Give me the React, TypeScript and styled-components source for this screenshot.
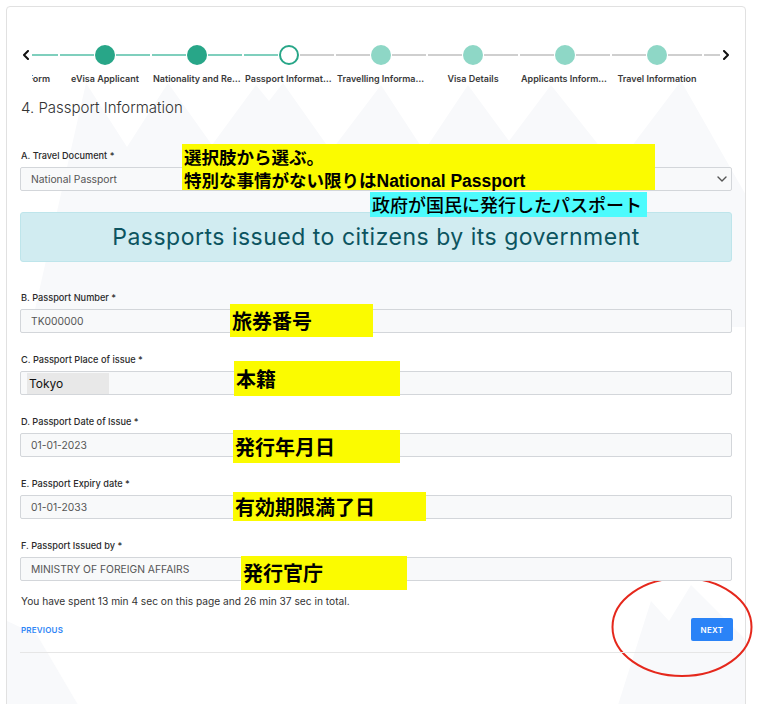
import React from 'react';
import styled, { createGlobalStyle } from 'styled-components';

type StepState = 'done' | 'current' | 'todo';

type Step = {
    label: string
    state: StepState
}

const steps: Step[] = [
    { label: 'Application Form', state: 'done' },
    { label: 'eVisa Applicant', state: 'done' },
    { label: 'Nationality and Residence', state: 'done' },
    { label: 'Passport Information', state: 'current' },
    { label: 'Travelling Information', state: 'todo' },
    { label: 'Visa Details', state: 'todo' },
    { label: 'Applicants Information', state: 'todo' },
    { label: 'Travel Information', state: 'todo' },
    { label: 'Confirmation', state: 'todo' },
];

const currentIndex = steps.findIndex(s => s.state === 'current');

type Note = {
    left: number
    top: number
    width: number
    height: number
    text: string
}

type FieldData = {
    label: string
    value: string
    highlight?: boolean
    note: Note
}

const fields: FieldData[] = [
    { label: 'B. Passport Number *', value: 'TK000000', note: { left: 210, top: 12, width: 143, height: 33, text: '旅券番号' } },
    { label: 'C. Passport Place of issue *', value: 'Tokyo', highlight: true, note: { left: 214, top: 7, width: 166, height: 35, text: '本籍' } },
    { label: 'D. Passport Date of Issue *', value: '01-01-2023', note: { left: 213, top: 14, width: 167, height: 33, text: '発行年月日' } },
    { label: 'E. Passport Expiry date *', value: '01-01-2033', note: { left: 213, top: 14, width: 193, height: 29, text: '有効期限満了日' } },
    { label: 'F. Passport Issued by *', value: 'MINISTRY OF FOREIGN AFFAIRS', note: { left: 221, top: 16, width: 166, height: 34, text: '発行官庁' } },
];

const Chevron = ({ dir }: { dir: 'left' | 'right' | 'down' }) => {
    const d = dir === 'left' ? 'M6 1 L2 5 L6 9' : dir === 'right' ? 'M2 1 L6 5 L2 9' : 'M1 2 L5 6 L9 2';
    const w = dir === 'down' ? 10 : 8;
    const h = dir === 'down' ? 8 : 10;
    return (
        <svg width={w} height={h} viewBox={`0 0 ${w} ${h}`}>
            <path d={d} fill="none" stroke={dir === 'down' ? '#555' : '#111'} strokeWidth={dir === 'down' ? 1.4 : 2} strokeLinecap="round" strokeLinejoin="round"/>
        </svg>
    );
};

const App = () => {
    return (
        <Page>
            <GlobalStyle/>
            <Card>
                <Mountains viewBox="0 0 740 720" preserveAspectRatio="none">
                    <polygon
                        points="24,320 79,76 120,140 161,76 205,138 249,78 262,94 276,76 324,144 374,78 417,144 461,78 502,134 544,78 609,160 674,74 740,190 740,320"
                        fill="#f8f9fb"/>
                    <polygon points="0,614 30,628 84,720 0,720" fill="#f8f9fb"/>
                    <polygon points="604,720 644,594 662,614 684,578 740,634 740,720" fill="#f8f9fb"/>
                </Mountains>
                <Content>
                    <Stepper>
                        <Arrow><Chevron dir="left"/></Arrow>
                        <StepViewport>
                            <StepTrack>
                                {steps.map((step, i) => (
                                    <StepCell key={step.label}>
                                        <StepLineRow>
                                            <Connector active={i <= currentIndex}/>
                                            <Dot state={step.state}/>
                                            <Connector active={i < currentIndex}/>
                                        </StepLineRow>
                                        <StepLabel>{step.label}</StepLabel>
                                    </StepCell>
                                ))}
                            </StepTrack>
                        </StepViewport>
                        <Arrow><Chevron dir="right"/></Arrow>
                    </Stepper>

                    <Heading>4. Passport Information</Heading>

                    <FieldGroup first>
                        <FieldLabel>A. Travel Document *</FieldLabel>
                        <Control>
                            <ControlText>National Passport</ControlText>
                            <Chevron dir="down"/>
                        </Control>
                        <NoteBox left={162} top={-6} width={473} height={46} tone="yellow" multi>
                            <span>選択肢から選ぶ。</span>
                            <span>特別な事情がない限りは<Latin>National Passport</Latin></span>
                        </NoteBox>
                        <NoteBox left={350} top={42} width={277} height={25} tone="cyan">
                            政府が国民に発行したパスポート
                        </NoteBox>
                    </FieldGroup>

                    <Alert>Passports issued to citizens by its government</Alert>

                    {fields.map(f => (
                        <FieldGroup key={f.label}>
                            <FieldLabel>{f.label}</FieldLabel>
                            <Control>
                                {f.highlight
                                    ? <Filled>{f.value}</Filled>
                                    : <ControlText>{f.value}</ControlText>}
                            </Control>
                            <NoteBox left={f.note.left} top={f.note.top} width={f.note.width} height={f.note.height} tone="yellow">
                                {f.note.text}
                            </NoteBox>
                        </FieldGroup>
                    ))}

                    <Timer>You have spent 13 min 4 sec on this page and 26 min 37 sec in total.</Timer>

                    <Footer>
                        <PrevLink>PREVIOUS</PrevLink>
                        <NextButton>NEXT</NextButton>
                    </Footer>
                    <Divider/>
                </Content>
            </Card>
            <Circled viewBox="0 0 759 704">
                <ellipse cx="682" cy="627" rx="69.5" ry="49" fill="none" stroke="#e5281c" strokeWidth="2"/>
            </Circled>
        </Page>
    );
};

export default App;

const GlobalStyle = createGlobalStyle`
    html, body {
        margin: 0;
        padding: 0;
        background: #ffffff;
    }
    body {
        font-family: Inter, "Liberation Sans", "Noto Sans CJK JP", sans-serif;
        color: #333;
    }
`

const Page = styled.div`
    position: relative;
    width: 759px;
    height: 704px;
    overflow: hidden;
    padding: 6px 0 0 6px;
    box-sizing: border-box;
`

const Card = styled.div`
    position: relative;
    width: 740px;
    min-height: 730px;
    box-sizing: border-box;
    border: 1px solid #e1e1e1;
    border-radius: 4px;
    background: #fff;
    overflow: hidden;
`

const Mountains = styled.svg`
    position: absolute;
    left: 0;
    top: 0;
    width: 740px;
    height: 720px;
    z-index: 0;
`

const Content = styled.div`
    position: relative;
    z-index: 1;
    padding: 38px 13px 0 13px;
`

const Stepper = styled.div`
    display: flex;
    align-items: flex-start;
    height: 40px;
`

const Arrow = styled.div`
    width: 12px;
    height: 20px;
    display: flex;
    align-items: center;
    justify-content: center;
    flex: none;
`

const StepViewport = styled.div`
    flex: 1;
    overflow: hidden;
`

const StepTrack = styled.div`
    display: flex;
    margin-left: -65px;
`

const StepCell = styled.div`
    width: 92px;
    flex: none;
    display: flex;
    flex-direction: column;
    align-items: center;
`

const StepLineRow = styled.div`
    width: 100%;
    height: 20px;
    display: flex;
    align-items: center;
`

const Connector = styled.div<{ active: boolean }>`
    flex: 1;
    height: 2px;
    margin: 0 1px;
    background: ${p => p.active ? '#7fcfbd' : '#cfcfcf'};
`

const Dot = styled.div<{ state: StepState }>`
    width: 20px;
    height: 20px;
    border-radius: 50%;
    box-sizing: border-box;
    flex: none;
    background: ${p => p.state === 'done' ? '#28a688' : p.state === 'current' ? '#fff' : '#8ed7c6'};
    border: ${p => p.state === 'current' ? '2px solid #28a688' : 'none'};
`

const StepLabel = styled.div`
    width: 92px;
    box-sizing: border-box;
    padding: 0 2px;
    margin-top: 8px;
    font-size: 9px;
    line-height: 12px;
    font-weight: 600;
    color: #3a3a3a;
    text-align: center;
    white-space: nowrap;
    overflow: hidden;
    text-overflow: ellipsis;
`

const Heading = styled.h2`
    margin: 13px 0 0 1px;
    font-size: 15px;
    line-height: 20px;
    font-weight: 300;
    color: #333;
`

const FieldGroup = styled.div<{ first?: boolean }>`
    position: relative;
    margin-top: ${p => p.first ? '32px' : '0'};
    margin-bottom: ${p => p.first ? '0' : '21px'};
`

const FieldLabel = styled.div`
    font-size: 9.2px;
    line-height: 12px;
    font-weight: 500;
    color: #2a2a2a;
    margin: 0 0 5px 1px;
`

const Control = styled.div`
    height: 24px;
    box-sizing: border-box;
    border: 1px solid #d3d6da;
    border-radius: 2px;
    background: #f8f9fa;
    display: flex;
    align-items: center;
    justify-content: space-between;
    padding: 0 4px 0 10px;
`

const ControlText = styled.span`
    font-size: 10.3px;
    color: #555;
`

const Filled = styled.span`
    align-self: flex-end;
    margin-left: -4px;
    width: 82px;
    height: 21px;
    box-sizing: border-box;
    padding: 3px 0 0 2px;
    background: #e8e8e8;
    font-size: 12px;
    color: #111;
`

const NoteBox = styled.div<{ left: number, top: number, width: number, height: number, tone: 'yellow' | 'cyan', multi?: boolean }>`
    position: absolute;
    left: ${p => p.left}px;
    top: ${p => p.top}px;
    width: ${p => p.width}px;
    height: ${p => p.height}px;
    box-sizing: border-box;
    background: ${p => p.tone === 'yellow' ? '#fbfb00' : '#4dfbfd'};
    color: #000;
    font-family: "Noto Sans CJK JP", sans-serif;
    font-size: ${p => p.multi ? '17.5px' : p.tone === 'cyan' ? '18px' : '20px'};
    font-weight: ${p => p.tone === 'cyan' ? 500 : 700};
    line-height: ${p => p.multi ? '23px' : `${p.height}px`};
    padding: ${p => p.multi ? '1px 0 0 2px' : '0 0 0 2px'};
    display: flex;
    flex-direction: column;
    white-space: nowrap;
`

const Latin = styled.span`
    font-family: "Liberation Sans", Arial, sans-serif;
    font-weight: 700;
`

const Alert = styled.div`
    margin: 21px 0 30px 0;
    height: 50px;
    box-sizing: border-box;
    border: 1px solid #bee5eb;
    border-radius: 3px;
    background: #d1ecf1;
    color: #0c5460;
    font-size: 23px;
    letter-spacing: 0.5px;
    display: flex;
    align-items: center;
    justify-content: center;
`

const Timer = styled.div`
    margin: -7px 0 0 1px;
    font-size: 10.2px;
    line-height: 12px;
    color: #333;
`

const Footer = styled.div`
    margin-top: 11px;
    height: 23px;
    display: flex;
    align-items: center;
    justify-content: space-between;
`

const PrevLink = styled.a`
    margin-left: 1px;
    font-size: 8px;
    font-weight: 600;
    letter-spacing: 0.2px;
    color: #2f86f6;
    cursor: pointer;
`

const NextButton = styled.button`
    width: 42px;
    height: 23px;
    margin-right: -1px;
    border: none;
    border-radius: 2px;
    background: #2a83f7;
    color: #fff;
    font-family: Inter, "Liberation Sans", sans-serif;
    font-size: 8px;
    font-weight: 600;
    letter-spacing: 0.3px;
    padding: 0;
`

const Divider = styled.div`
    margin-top: 11px;
    height: 1px;
    background: #e6e6e6;
`

const Circled = styled.svg`
    position: absolute;
    left: 0;
    top: 0;
    width: 759px;
    height: 704px;
    pointer-events: none;
`
